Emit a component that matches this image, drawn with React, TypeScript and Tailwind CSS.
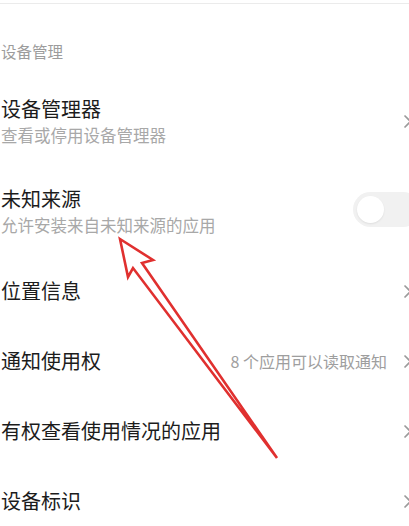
const font = { fontFamily: '"Noto Sans CJK SC", "Noto Sans", sans-serif' }

function Chevron() {
  return (
    <svg width="9" height="15" viewBox="0 0 9 15" className="mr-[-3px] shrink-0">
      <path d="M1.5 1.5 L7.5 7.5 L1.5 13.5" fill="none" stroke="#9a9a9a" strokeWidth="1.6" />
    </svg>
  )
}

function Row({ title, sub, right }: { title: string; sub?: string; right?: React.ReactNode }) {
  return (
    <div className={`flex items-center justify-between pl-[1px] ${sub ? "h-[90px]" : "h-[70px]"}`}>
      <div className="flex flex-col gap-[1px]">
        <span className="text-[20px] leading-[26px] text-[#1c1c1c]">{title}</span>
        {sub ? <span className="text-[16.5px] leading-[24px] text-[#a8a8a8]">{sub}</span> : null}
      </div>
      {right}
    </div>
  )
}

export default function App() {
  return (
    <div className="relative w-[409px] h-[526px] overflow-hidden bg-white" style={font}>
      <div className="h-[3px]" />
      <div className="h-px bg-[#ebebeb]" />

      {/* section header */}
      <div className="h-[72px] pt-[35px] pl-[1px]">
        <span className="text-[15.5px] leading-[20px] text-[#9c9c9c]">设备管理</span>
      </div>

      <Row title="设备管理器" sub="查看或停用设备管理器" right={<Chevron />} />
      <Row
        title="未知来源"
        sub="允许安装来自未知来源的应用"
        right={
          <div className="mr-[-12px] mb-[3px] w-[68px] h-[35px] rounded-full bg-[#f1f1f1] flex items-center pl-[4px] shrink-0">
            <div className="w-[27px] h-[27px] rounded-full bg-white shadow-[0_1px_2px_rgba(0,0,0,0.08)]" />
          </div>
        }
      />
      <Row title="位置信息" right={<Chevron />} />
      <Row
        title="通知使用权"
        right={
          <div className="flex items-center gap-[16px]">
            <span className="text-[16px] text-[#9e9e9e]">8 个应用可以读取通知</span>
            <Chevron />
          </div>
        }
      />
      <Row title="有权查看使用情况的应用" right={<Chevron />} />
      <Row title="设备标识" right={<Chevron />} />

      {/* annotation arrow */}
      <svg className="absolute inset-0 pointer-events-none" width="409" height="526" viewBox="0 0 409 526">
        <polygon
          points="120,239 153,260 142,263 277,458 133,268 128,277"
          fill="none"
          stroke="#e0302f"
          strokeWidth="2.6"
          strokeLinejoin="miter"
        />
      </svg>
    </div>
  )
}
